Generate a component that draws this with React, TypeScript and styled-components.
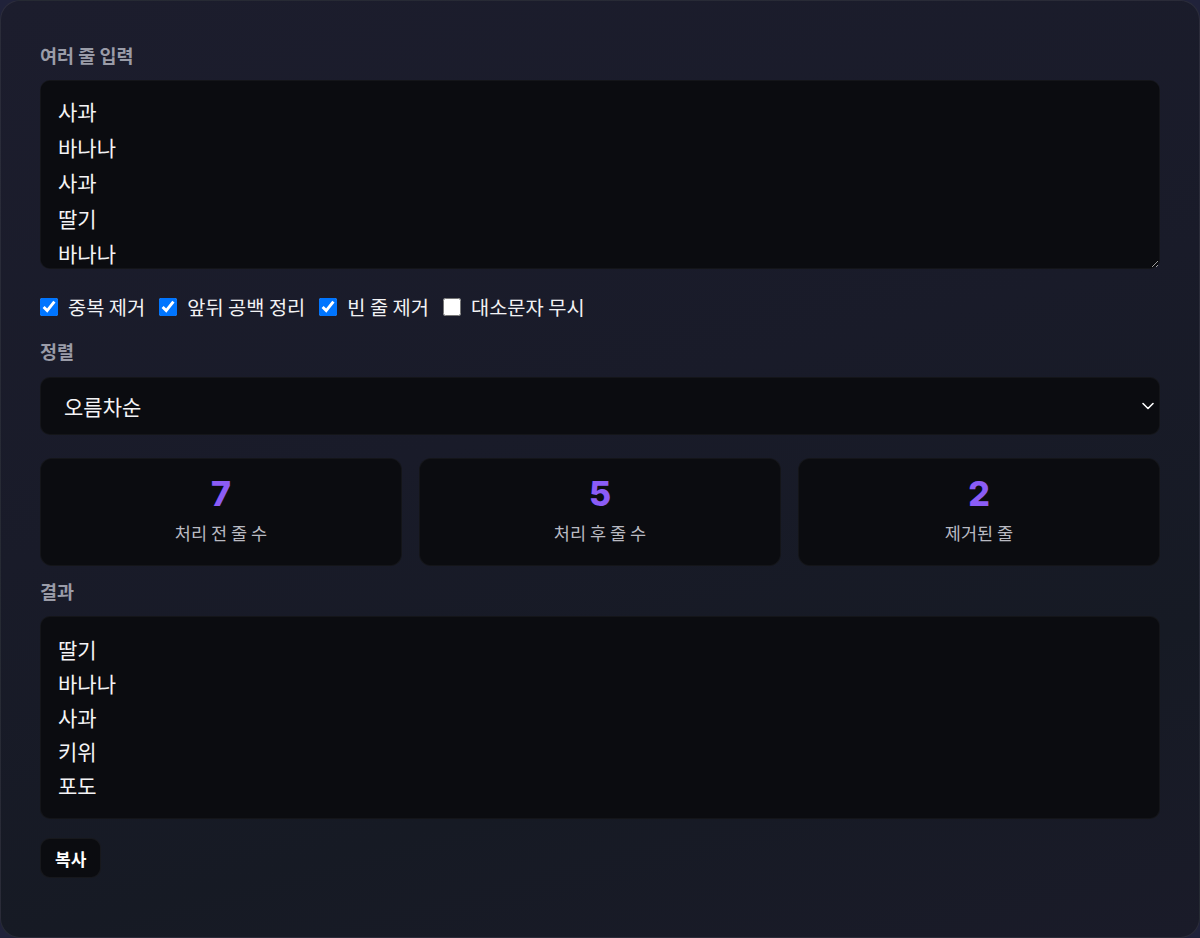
import React, { useState } from "react";
import styled, { createGlobalStyle } from "styled-components";

const GlobalStyle = createGlobalStyle`
  html, body { margin: 0; padding: 0; background: #20223a; }
  body { font-family: "Noto Sans CJK KR", "Noto Sans", sans-serif; }
  * { box-sizing: border-box; }
`;

const Card = styled.div`
  width: 1200px;
  height: 938px;
  border-radius: 20px;
  border: 1px solid rgba(255, 255, 255, 0.07);
  background: linear-gradient(165deg, #1c1d2d 0%, #191b29 45%, #161a24 75%, #1a1b29 100%);
  padding: 42px 39px 0 39px;
  display: flex;
  flex-direction: column;
  overflow: hidden;
  & > * { flex-shrink: 0; }
`;

const Label = styled.div<{ $top?: number; $bottom?: number }>`
  font-size: 18.5px;
  line-height: 24px;
  font-weight: 700;
  color: #9a9ca8;
  margin-top: ${(p) => p.$top ?? 0}px;
  margin-bottom: ${(p) => p.$bottom ?? 13}px;
`;

const TextArea = styled.textarea`
  display: block;
  width: 100%;
  height: 189px;
  margin: 0;
  background: #0b0c10;
  color: #f4f4f6;
  border: 1px solid rgba(255, 255, 255, 0.04);
  border-radius: 10px;
  padding: 13px 17px;
  font-family: "Noto Sans CJK KR", "Noto Sans", sans-serif;
  font-size: 21px;
  line-height: 35.5px;
  resize: vertical;
  outline: none;
  scrollbar-width: none;
`;

const OptionRow = styled.div`
  display: flex;
  align-items: center;
  gap: 14px;
  margin-top: 25px;
  height: 26px;
`;

const OptionLabel = styled.label`
  display: flex;
  align-items: center;
  gap: 10px;
  font-size: 19.8px;
  line-height: 26px;
  color: #f2f2f4;
  cursor: pointer;
`;

const Check = styled.input`
  width: 18px;
  height: 18px;
  margin: 0;
  accent-color: #0075ff;
`;

const SelectWrap = styled.div`
  position: relative;
  width: 100%;
`;

const Select = styled.select`
  display: block;
  width: 100%;
  height: 58px;
  appearance: none;
  background: #0b0c10;
  color: #f4f4f6;
  border: 1px solid rgba(255, 255, 255, 0.04);
  border-radius: 10px;
  padding: 0 23px;
  font-family: "Noto Sans CJK KR", "Noto Sans", sans-serif;
  font-size: 21px;
  outline: none;
`;

const Chevron = styled.svg`
  position: absolute;
  right: 5px;
  top: 50%;
  transform: translateY(-50%);
  pointer-events: none;
`;

const StatGrid = styled.div`
  display: grid;
  grid-template-columns: repeat(3, 1fr);
  gap: 17px;
  margin-top: 23px;
`;

const StatCard = styled.div`
  background: #0b0c10;
  border: 1px solid rgba(255, 255, 255, 0.04);
  border-radius: 12px;
  height: 108px;
  padding-top: 15px;
  display: flex;
  flex-direction: column;
  align-items: center;
  gap: 8px;
`;

const StatValue = styled.div`
  font-family: Inter, "Noto Sans", sans-serif;
  font-size: 34px;
  line-height: 40px;
  font-weight: 800;
  color: #8b5cf6;
`;

const StatLabel = styled.div`
  font-size: 17.5px;
  line-height: 22px;
  color: #b9bac2;
`;

const Result = styled.div`
  background: #0b0c10;
  border: 1px solid rgba(255, 255, 255, 0.04);
  border-radius: 10px;
  height: 203px;
  padding: 15px 17px;
  font-size: 21px;
  line-height: 34px;
  color: #f4f4f6;
  white-space: pre;
`;

const CopyButton = styled.button`
  align-self: flex-start;
  margin-top: 19px;
  height: 40px;
  padding: 0 14px;
  background: #0b0c10;
  border: 1px solid rgba(255, 255, 255, 0.05);
  border-radius: 10px;
  color: #ffffff;
  font-family: "Noto Sans CJK KR", "Noto Sans", sans-serif;
  font-size: 17px;
  font-weight: 700;
  cursor: pointer;
`;

const INPUT = "사과\n바나나\n사과\n딸기\n바나나\n키위\n포도";

export default function App() {
  const [text, setText] = useState(INPUT);
  const [opts, setOpts] = useState({ dedupe: true, trim: true, empty: true, icase: false });
  const [sort, setSort] = useState("asc");

  let lines = text.split("\n");
  const before = lines.length;
  if (opts.trim) lines = lines.map((l) => l.trim());
  if (opts.empty) lines = lines.filter((l) => l.length > 0);
  if (opts.dedupe) {
    const seen = new Set<string>();
    lines = lines.filter((l) => {
      const k = opts.icase ? l.toLowerCase() : l;
      if (seen.has(k)) return false;
      seen.add(k);
      return true;
    });
  }
  if (sort === "asc") lines = [...lines].sort((a, b) => a.localeCompare(b, "ko"));
  if (sort === "desc") lines = [...lines].sort((a, b) => b.localeCompare(a, "ko"));
  const after = lines.length;

  const toggle = (k: keyof typeof opts) => setOpts({ ...opts, [k]: !opts[k] });

  return (
    <>
      <GlobalStyle />
      <Card>
        <Label>여러 줄 입력</Label>
        <TextArea value={text} onChange={(e) => setText(e.target.value)} />
        <OptionRow>
          <OptionLabel>
            <Check type="checkbox" checked={opts.dedupe} onChange={() => toggle("dedupe")} />
            중복 제거
          </OptionLabel>
          <OptionLabel>
            <Check type="checkbox" checked={opts.trim} onChange={() => toggle("trim")} />
            앞뒤 공백 정리
          </OptionLabel>
          <OptionLabel>
            <Check type="checkbox" checked={opts.empty} onChange={() => toggle("empty")} />
            빈 줄 제거
          </OptionLabel>
          <OptionLabel>
            <Check type="checkbox" checked={opts.icase} onChange={() => toggle("icase")} />
            대소문자 무시
          </OptionLabel>
        </OptionRow>
        <Label $top={19} $bottom={14}>정렬</Label>
        <SelectWrap>
          <Select value={sort} onChange={(e) => setSort(e.target.value)}>
            <option value="none">정렬 안 함</option>
            <option value="asc">오름차순</option>
            <option value="desc">내림차순</option>
          </Select>
          <Chevron width="14" height="14" viewBox="0 0 14 14" fill="none">
            <path d="M2 4.5 L7 9.5 L12 4.5" stroke="#ffffff" strokeWidth="1.6" strokeLinecap="round" strokeLinejoin="round" />
          </Chevron>
        </SelectWrap>
        <StatGrid>
          <StatCard>
            <StatValue>{before}</StatValue>
            <StatLabel>처리 전 줄 수</StatLabel>
          </StatCard>
          <StatCard>
            <StatValue>{after}</StatValue>
            <StatLabel>처리 후 줄 수</StatLabel>
          </StatCard>
          <StatCard>
            <StatValue>{before - after}</StatValue>
            <StatLabel>제거된 줄</StatLabel>
          </StatCard>
        </StatGrid>
        <Label $top={13}>결과</Label>
        <Result>{lines.join("\n")}</Result>
        <CopyButton onClick={() => navigator.clipboard?.writeText(lines.join("\n"))}>복사</CopyButton>
      </Card>
    </>
  );
}
